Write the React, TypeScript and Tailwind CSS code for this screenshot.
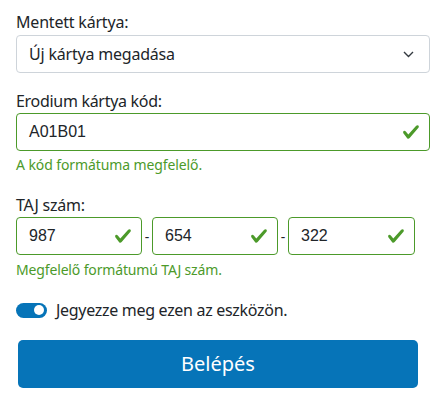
import React from "react";

const sans = { fontFamily: '"Noto Sans", "Open Sans", sans-serif' };
const arial = { fontFamily: '"Liberation Sans", Arial, sans-serif' };

function Check() {
  return (
    <svg width="18" height="18" viewBox="0 0 8 8" className="shrink-0">
      <path
        fill="#4c9a2a"
        d="M2.3 6.73L.6 4.53c-.4-1.04.46-1.4 1.1-.8l1.1 1.4 3.4-3.8c.6-.63 1.6-.27 1.2.7l-4 4.6c-.43.5-.8.4-1.1.1z"
      />
    </svg>
  );
}

export default function App() {
  return (
    <div className="w-[446px] h-[402px] bg-white px-4 pt-[10px] text-[#212529]" style={sans}>
      <div className="text-[16px] leading-6 mb-[1px] tracking-[-0.2px]">Mentett kártya:</div>
      <div className="h-[38px] border border-[#ced4da] rounded-[4px] flex items-center pl-[12px] pr-[15px] justify-between">
        <span className="text-[16px] tracking-[-0.2px]">Új kártya megadása</span>
        <svg width="11" height="7" viewBox="0 0 11 7" fill="none">
          <path d="M1 1l4.5 4.5L10 1" stroke="#343a40" strokeWidth="1.4" />
        </svg>
      </div>

      <div className="text-[16px] leading-6 mt-[16px] tracking-[-0.3px]">Erodium kártya kód:</div>
      <div className="h-[38px] border border-[#4c9a2a] rounded-[4px] flex items-center pl-[12px] pr-[9px] justify-between">
        <span className="text-[16px]" style={arial}>A01B01</span>
        <Check />
      </div>
      <div className="text-[14px] leading-[21px] mt-[3px] text-[#4c9a2a] tracking-[-0.1px]">A kód formátuma megfelelő.</div>

      <div className="text-[16px] leading-6 mt-[18px] tracking-[-0.2px]">TAJ szám:</div>
      <div className="flex items-center">
        {["987", "654", "322"].map((v, i) => (
          <React.Fragment key={v}>
            {i > 0 && <div className="w-[10px] shrink-0 text-center text-[14px]">-</div>}
            <div
              className={
                (i === 2 ? "w-[127px] " : "w-[126px] ") +
                "shrink-0 h-[38px] border border-[#4c9a2a] rounded-[4px] flex items-center pl-[12px] pr-[9px] justify-between"
              }
            >
              <span className="text-[16px]" style={arial}>{v}</span>
              <Check />
            </div>
          </React.Fragment>
        ))}
      </div>
      <div className="text-[14px] leading-[21px] mt-[4px] text-[#4c9a2a] tracking-[-0.15px]">Megfelelő formátumú TAJ szám.</div>

      <div className="flex items-center mt-[18px] h-[24px]">
        <div className="w-[31px] h-[15px] rounded-full bg-[#0674b8] relative">
          <div className="absolute right-[3px] top-[2.5px] w-[10px] h-[10px] rounded-full bg-white" />
        </div>
        <span className="ml-[9px] text-[16px] tracking-[-0.3px]">Jegyezze meg ezen az eszközön.</span>
      </div>

      <button className="mt-[18px] ml-[2px] w-[400px] h-[48px] rounded-[5px] bg-[#0674b8] text-white text-[20px]" style={sans}>
        Belépés
      </button>
    </div>
  );
}
